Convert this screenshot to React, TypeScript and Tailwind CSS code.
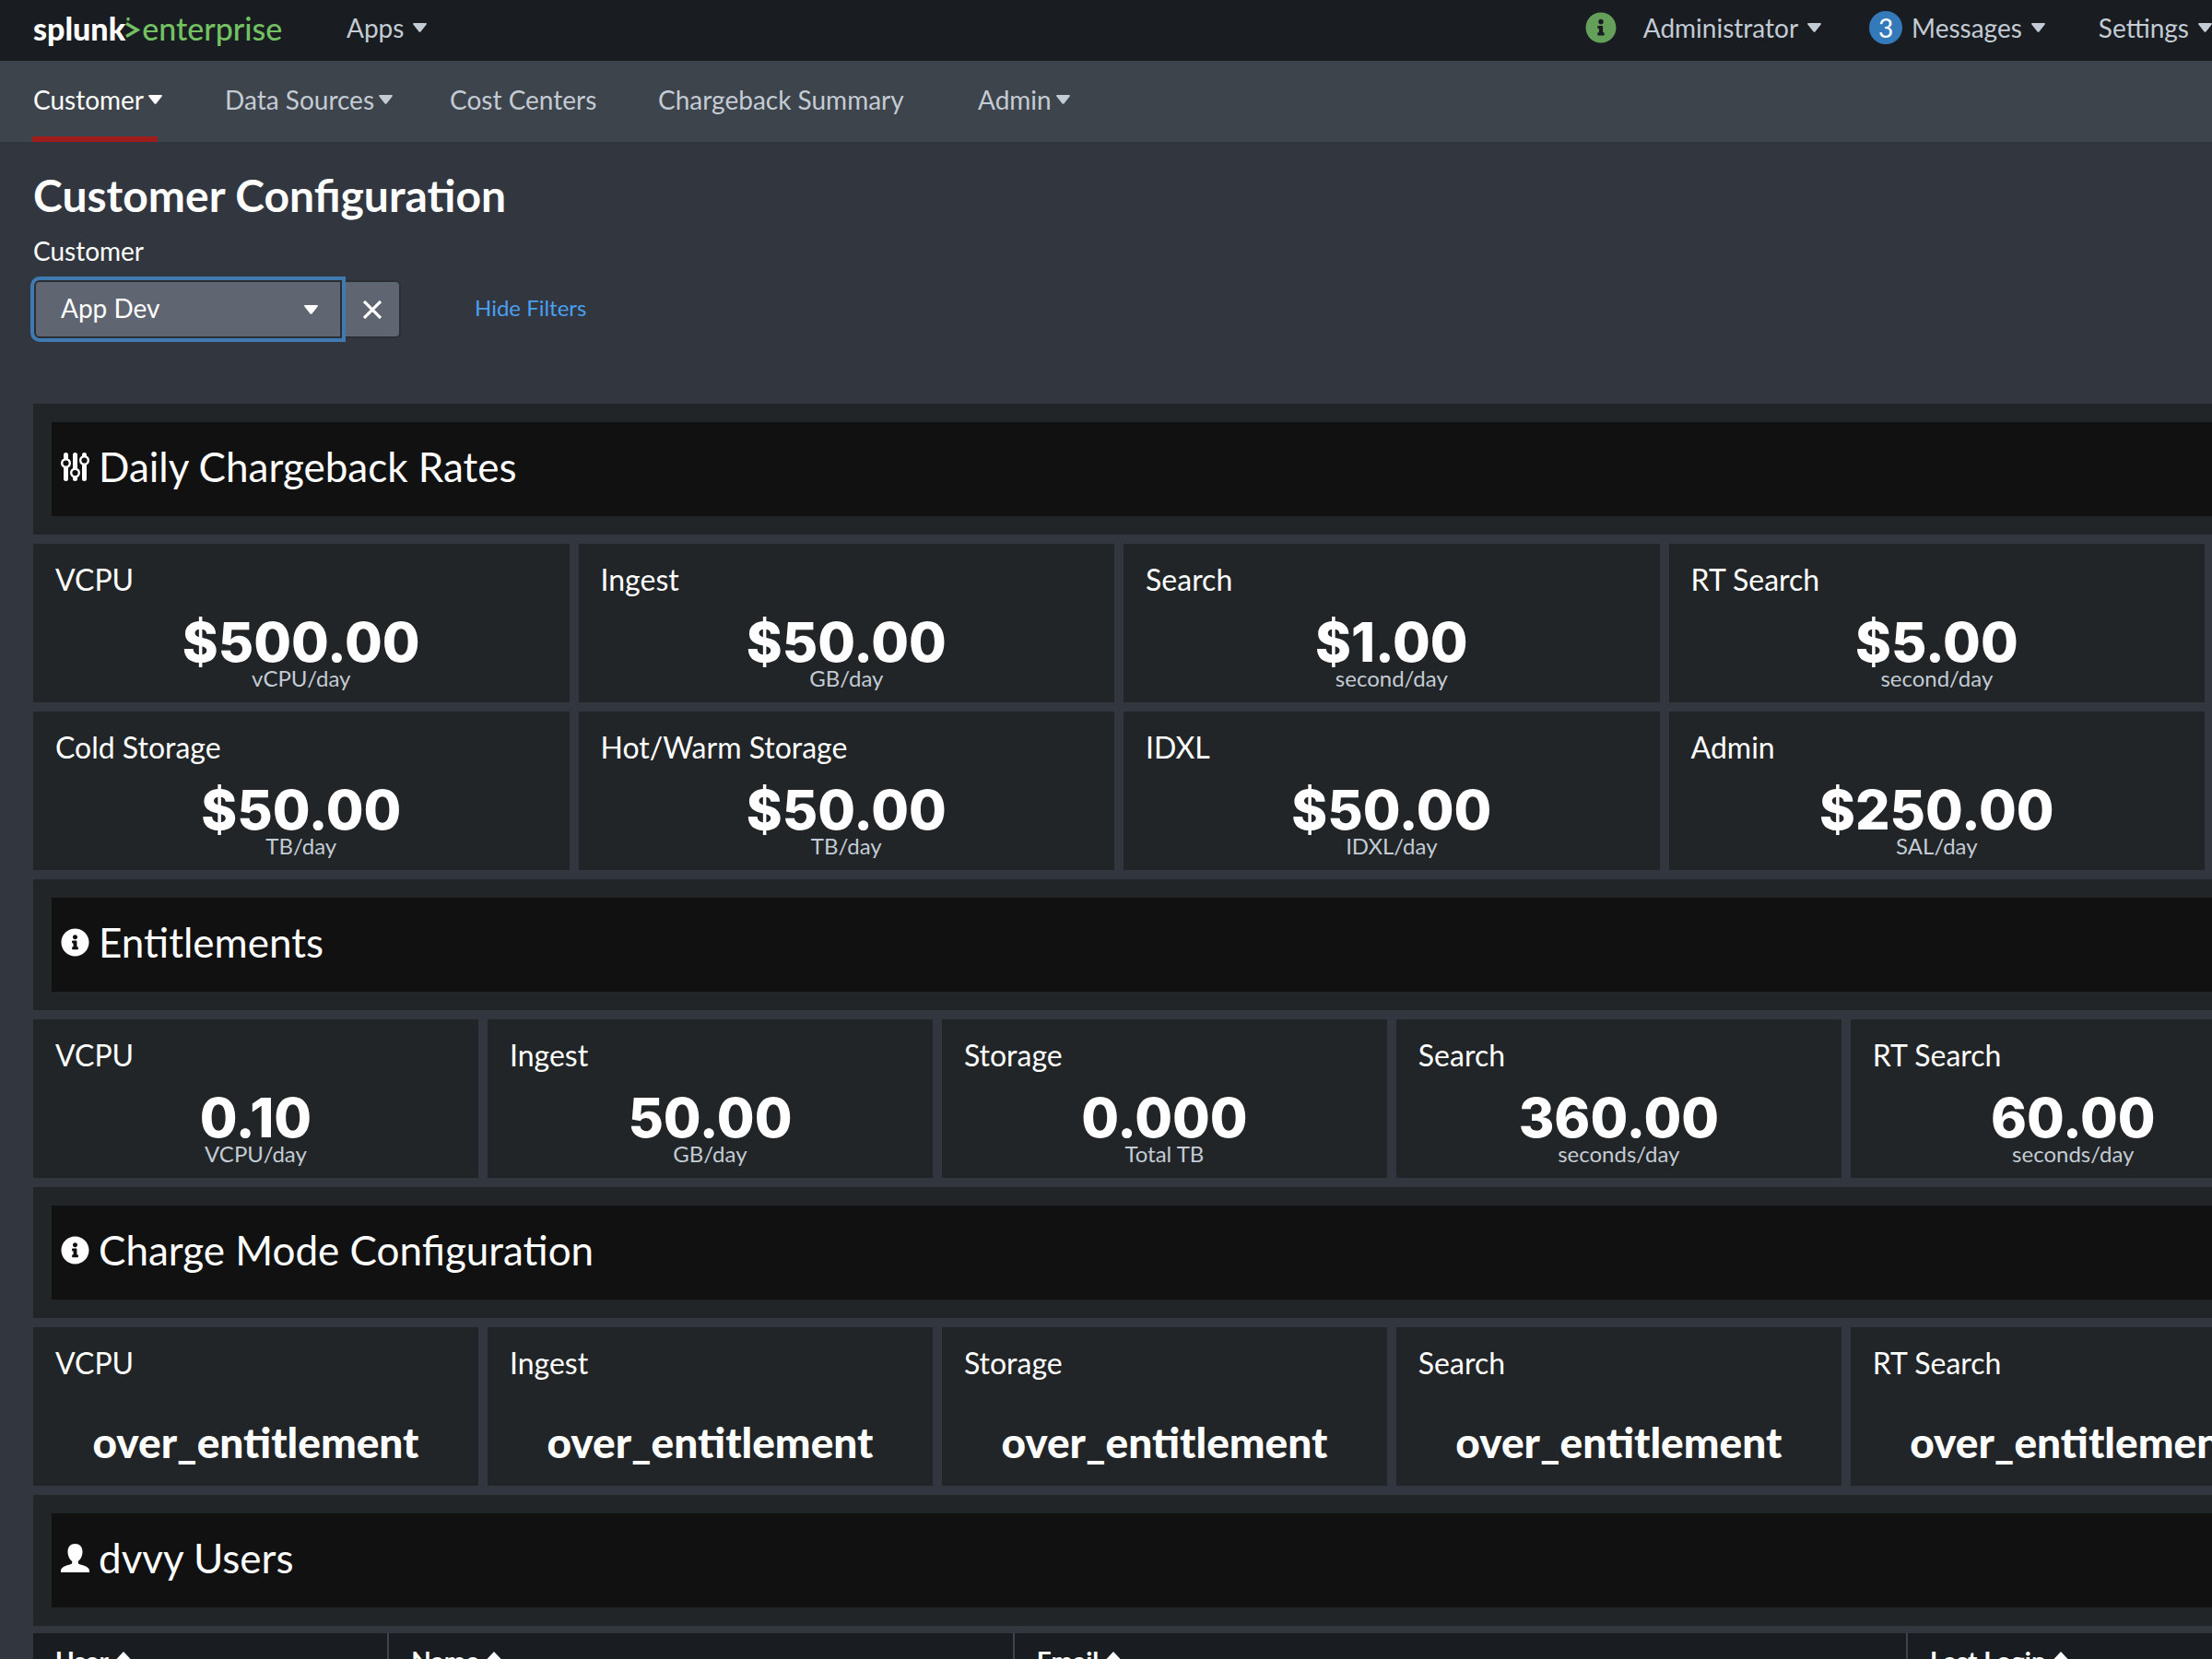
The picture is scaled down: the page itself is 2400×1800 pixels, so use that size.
import React, { useState } from 'react';
import { FaInfoCircle } from 'react-icons/fa';

interface Metric {
  title: string;
  value: string;
  unit?: string;
}

const rates: Metric[] = [
  { title: 'VCPU', value: '$500.00', unit: 'vCPU/day' },
  { title: 'Ingest', value: '$50.00', unit: 'GB/day' },
  { title: 'Search', value: '$1.00', unit: 'second/day' },
  { title: 'RT Search', value: '$5.00', unit: 'second/day' },
];

const storageRates: Metric[] = [
  { title: 'Cold Storage', value: '$50.00', unit: 'TB/day' },
  { title: 'Hot/Warm Storage', value: '$50.00', unit: 'TB/day' },
  { title: 'IDXL', value: '$50.00', unit: 'IDXL/day' },
  { title: 'Admin', value: '$250.00', unit: 'SAL/day' },
];

const entitlements: Metric[] = [
  { title: 'VCPU', value: '0.10', unit: 'VCPU/day' },
  { title: 'Ingest', value: '50.00', unit: 'GB/day' },
  { title: 'Storage', value: '0.000', unit: 'Total TB' },
  { title: 'Search', value: '360.00', unit: 'seconds/day' },
  { title: 'RT Search', value: '60.00', unit: 'seconds/day' },
];

const chargeModes: Metric[] = [
  { title: 'VCPU', value: 'over_entitlement' },
  { title: 'Ingest', value: 'over_entitlement' },
  { title: 'Storage', value: 'over_entitlement' },
  { title: 'Search', value: 'over_entitlement' },
  { title: 'RT Search', value: 'over_entitlement' },
];

const navItems = [
  { label: 'Customer', menu: true },
  { label: 'Data Sources', menu: true },
  { label: 'Cost Centers', menu: false },
  { label: 'Chargeback Summary', menu: false },
  { label: 'Admin', menu: true },
];

const columns = [
  { name: 'User', width: 'w-[16.3%]' },
  { name: 'Name', width: 'w-[28.7%]' },
  { name: 'Email', width: 'w-[41%]' },
  { name: 'Last Login', width: 'w-[14%]' },
];

const Caret = () => (
  <svg viewBox="0 0 15 10" className="w-[15px] h-[10px] shrink-0" fill="currentColor" aria-hidden="true">
    <path d="M1.2 0h12.6c.9 0 1.4.9.9 1.6L8.4 9.4c-.4.6-1.4.6-1.8 0L.3 1.6C-.2.9.3 0 1.2 0z" />
  </svg>
);

const SortArrow = () => (
  <svg viewBox="0 0 16 20" className="w-4 h-5 shrink-0" fill="currentColor" aria-hidden="true">
    <path d="M8 0l8 8.500H0zM8 20l-8-8.500h16z" />
  </svg>
);

const SlidersIcon = () => (
  <svg viewBox="0 0 31 31" className="w-[31px] h-[31px] shrink-0" fill="none" stroke="currentColor" aria-hidden="true">
    <g strokeWidth="5" strokeLinecap="round">
      <path d="M5.500 2.500V6M5.500 17.500V28.500" />
      <path d="M15.500 2.500V16M15.500 27.500V28.500" />
      <path d="M25.500 2.500V3.500M25.500 14.500V28.500" />
    </g>
    <g strokeWidth="2.400" fill="#111111">
      <circle cx="5.500" cy="11.500" r="4.300" />
      <circle cx="15.500" cy="22" r="4.300" />
      <circle cx="25.500" cy="8.500" r="4.300" />
    </g>
  </svg>
);

const UserIcon = () => (
  <svg viewBox="0 0 31 31" className="w-[31px] h-[31px] shrink-0" fill="currentColor" aria-hidden="true">
    <path d="M15.500 0c4.800 0 8 3.400 8 8.500 0 4.600-2 8.600-4.700 10.400v1.500c0 1 .6 1.500 1.800 1.900 6 1.800 10.400 3.200 10.400 7.200V31H0v-1.500c0-4 4.400-5.400 10.400-7.200 1.200-.4 1.800-.9 1.800-1.900v-1.500C9.500 17.100 7.500 13.100 7.500 8.500 7.500 3.400 10.700 0 15.500 0z" />
  </svg>
);

const SectionHeader: React.FC<{ icon: React.ReactNode; children: React.ReactNode }> = ({ icon, children }) => (
  <div className="bg-[#212527] py-5 pl-5">
    <div className="h-[102px] bg-[#111111] pl-[10px] pb-[6px] flex items-center gap-[10px]">
      {icon}
      <h2 className="text-[44px] leading-[50px]">{children}</h2>
    </div>
  </div>
);

const Tile: React.FC<{ metric: Metric }> = ({ metric }) => (
  <div className="h-[172px] bg-[#212527] pt-5 flex flex-col whitespace-nowrap">
    <h3 className="px-6 text-[32px] leading-[38px]">{metric.title}</h3>
    {metric.unit ? (
      <div className="pt-5 text-center">
        <div className="font-['Inter',sans-serif] text-[59px] leading-[58px] font-extrabold">{metric.value}</div>
        <div className="text-[24px] leading-[20px] text-[#c3cbd4]">{metric.unit}</div>
      </div>
    ) : (
      <div className="pt-10 text-center text-[46px] leading-[54px] font-black">{metric.value}</div>
    )}
  </div>
);

export default function App() {
  const [customer, setCustomer] = useState('App Dev');

  return (
    <div className="min-h-screen overflow-hidden bg-[#32363e] text-white font-['Lato',sans-serif]">
      {/* Global bar */}
      <header className="h-[66px] bg-[#191d21] pl-9 pb-[6px] flex items-center text-[28px] text-[#c3cbd4] whitespace-nowrap">
        <a href="#" className="flex items-center text-[34px] w-[340px]">
          <span className="font-black text-white">splunk</span>
          <svg viewBox="0 0 16 26" className="w-4 h-[26px] mt-1 mr-[2px]" fill="none" stroke="#74c163" aria-hidden="true">
            <path d="M1 6.500l12 7L1 20.500" strokeWidth="3.400" />
            <path d="M3 0v3.500" strokeWidth="3" />
          </svg>
          <span className="text-[#74c163] font-medium">enterprise</span>
        </a>
        <button className="flex items-center gap-[10px]">Apps <Caret /></button>
        <div className="ml-auto flex items-center">
          <FaInfoCircle className="text-[#65a05b] w-[34px] h-[34px] mr-[29px]" />
          <button className="flex items-center gap-[10px] mr-[52px]">Administrator <Caret /></button>
          <button className="flex items-center gap-[10px] mr-[58px]">
            <span className="w-9 h-9 rounded-full bg-[#3479b9] text-white flex items-center justify-center">3</span>
            Messages <Caret />
          </button>
          <button className="flex items-center gap-[10px]">Settings <Caret /></button>
        </div>
      </header>

      <nav className="h-[88px] bg-[#3e444b] pl-[35px] grid grid-cols-[208px_244px_226px_347px_auto] text-[28px] text-[#c3cbd4] whitespace-nowrap">
        {navItems.map((item, i) => (
          <a
            key={item.label}
            href="#"
            className={`h-[88px] pl-px pt-[2px] flex items-center gap-[5px] border-b-[6px] ${i === 0 ? 'w-[136px] border-[#9e1d1b] text-white' : 'border-transparent'}`}
          >
            {item.label}
            {item.menu && <Caret />}
          </a>
        ))}
      </nav>

      <main className="pl-9">
        <h1 className="pt-7 text-[48px] leading-[60px] font-bold">Customer Configuration</h1>
        <label htmlFor="customer" className="block pt-3 text-[28px] leading-[36px]">Customer</label>
        <div className="pt-[14px] pl-px flex items-center">
          <div className="relative">
            <select
              id="customer"
              value={customer}
              onChange={(e) => setCustomer(e.target.value)}
              className="block appearance-none w-[334px] h-[63px] pl-[27px] pb-1 bg-[#606671] rounded-l-md border-2 border-[#2b2f33] outline-4 outline-[#3f7ab3] text-[28px]"
            >
              <option>App Dev</option>
            </select>
            <span className="absolute right-[26px] top-[27px] pointer-events-none"><Caret /></span>
          </div>
          <button aria-label="Clear" onClick={() => setCustomer('App Dev')} className="w-16 h-[63px] bg-[#606671] rounded-r-md border-2 border-l-0 border-[#2b2f33] pl-1 flex items-center justify-center">
            <svg viewBox="0 0 20 20" className="w-5 h-5" stroke="currentColor" strokeWidth="3.200" aria-hidden="true">
              <path d="M1 1l18 18M19 1L1 19" />
            </svg>
          </button>
          <a href="#" className="ml-20 pb-1 text-[24px] text-[#4a9ff0]">Hide Filters</a>
        </div>

        <div className="pt-[71px] flex flex-col gap-[10px]">
          <SectionHeader icon={<SlidersIcon />}>Daily Chargeback Rates</SectionHeader>
          <div className="grid grid-flow-col auto-cols-[24.6%] gap-[10px]">
            {rates.map((m) => <Tile key={m.title} metric={m} />)}
          </div>
          <div className="grid grid-flow-col auto-cols-[24.6%] gap-[10px]">
            {storageRates.map((m) => <Tile key={m.title} metric={m} />)}
          </div>

          <SectionHeader icon={<FaInfoCircle className="w-[31px] h-[31px]" />}>Entitlements</SectionHeader>
          <div className="grid grid-flow-col auto-cols-[20.43%] gap-[10px]">
            {entitlements.map((m) => <Tile key={m.title} metric={m} />)}
          </div>

          <SectionHeader icon={<FaInfoCircle className="w-[31px] h-[31px]" />}>Charge Mode Configuration</SectionHeader>
          <div className="grid grid-flow-col auto-cols-[20.43%] gap-[10px]">
            {chargeModes.map((m) => <Tile key={m.title} metric={m} />)}
          </div>

          <SectionHeader icon={<UserIcon />}>dvvy Users</SectionHeader>
        </div>

        <div className="h-7 mt-2 overflow-hidden">
          <table className="w-full table-fixed text-left text-[28px] leading-[32px] bg-[#191d21]">
            <thead>
              <tr>
                {columns.map((col, i) => (
                  <th
                    key={col.name}
                    className={`pt-[14px] pb-4 pl-6 font-bold ${col.width} ${i < columns.length - 1 ? 'border-r-2 border-[#3c444d]' : ''}`}
                  >
                    <span className="flex items-center gap-2">{col.name} <SortArrow /></span>
                  </th>
                ))}
              </tr>
            </thead>
          </table>
        </div>
      </main>
    </div>
  );
}
